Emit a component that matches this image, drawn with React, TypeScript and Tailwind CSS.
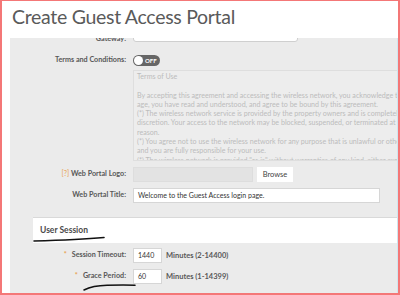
import type { ReactNode } from 'react';

const font = { fontFamily: 'Lato, "Open Sans", sans-serif' };

function Row({ label, children, className = '', labelClass = '' }: { label: ReactNode; children: ReactNode; className?: string; labelClass?: string }) {
  return (
    <div className={`flex items-center ${className}`}>
      <div className={`w-[123px] shrink-0 pr-[7px] text-right text-[7.2px] font-bold text-[#585858] ${labelClass}`}>{label}</div>
      <div className="flex items-center gap-[4px]">{children}</div>
    </div>
  );
}

const terms = [
  'Terms of Use',
  '\u00a0',
  'By accepting this agreement and accessing the wireless network, you acknowledge that you are of legal',
  'age, you have read and understood, and agree to be bound by this agreement.',
  '(*) The wireless network service is provided by the property owners and is completely at their',
  'discretion. Your access to the network may be blocked, suspended, or terminated at any time for any',
  'reason.',
  '(*) You agree not to use the wireless network for any purpose that is unlawful or otherwise prohibited',
  'and you are fully responsible for your use.',
  '(*) The wireless network is provided "as is" without warranties of any kind, either expressed or implied.',
];

export default function App() {
  return (
    <div
      className="relative w-[400px] h-[295px] overflow-hidden bg-white border-l-2 border-t border-r-2 border-b-2 border-[#f47777]"
      style={font}
    >
      <div className="h-[37px] pl-[10px] pt-[3px] text-[19.5px] leading-[26px] tracking-[-0.3px] text-[#5a5a5a]">Create Guest Access Portal</div>

      <div className="ml-[8px] h-[255px] overflow-hidden bg-[#ebebeb] border-r border-[#cfe6ef]">
        <div className="-mt-[11px]">
          <Row label="Gateway:" className="h-[15px] !items-end" labelClass="leading-[9px] -mb-[1px]">
            <div className="w-[165px] h-[15px] rounded-b-[3px] border border-[#cfcfcf] bg-white" />
          </Row>

          <Row label="Terms and Conditions:" className="mt-[13px] h-[11px]">
            <div className="flex h-[11px] w-[27px] items-center rounded-full bg-[#666666] pl-[1px]">
              <div className="h-[9px] w-[9px] rounded-full bg-white" />
              <span className="ml-[2px] text-[6px] font-bold leading-none text-white">OFF</span>
            </div>
          </Row>

          <div className="ml-[123px] mt-[4px] h-[91px] w-[300px] overflow-hidden border border-[#dedede] bg-[#ededed] px-[3px] pt-[1px] text-[7.1px] leading-[9.3px] whitespace-nowrap text-[#bcbcbc]">
            {terms.map((t, i) => (
              <div key={i}>{t}</div>
            ))}
          </div>

          <Row
            label={
              <>
                <span className="text-[#e8a14c] font-normal">[?]</span> Web Portal Logo:
              </>
            }
            className="mt-[6px] h-[15px]"
          >
            <div className="w-[120px] h-[15px] border border-[#dddddd] bg-[#e3e3e3]" />
            <div className="flex h-[15px] w-[36px] items-center justify-center bg-white text-[7.5px] text-[#444]">Browse</div>
          </Row>

          <Row label="Web Portal Title:" className="mt-[6px] h-[15px]">
            <div className="flex h-[15px] w-[247px] items-center border border-[#d6d6d6] bg-white px-[4px] text-[7px] text-[#333]">
              Welcome to the Guest Access login page.
            </div>
          </Row>

          <div className="mt-[14px] ml-[23px] h-[26px] border-t border-[#d9d9d9] bg-white pl-[7px] pt-[6px] text-[8.5px] font-bold text-[#4a4a4a]">
            User Session
          </div>

          <Row
            label={
              <>
                <span className="text-[#e8a14c] mr-[5px]">*</span>Session Timeout:
              </>
            }
            className="mt-[5px] h-[15px]"
          >
            <div className="flex h-[15px] w-[29px] items-center border border-[#d6d6d6] bg-white px-[4px] text-[7px] text-[#333]">1440</div>
            <span className="text-[7.5px] font-bold text-[#585858]">Minutes (2-14400)</span>
          </Row>

          <Row
            label={
              <>
                <span className="text-[#e8a14c] mr-[5px]">*</span>Grace Period:
              </>
            }
            className="mt-[6px] h-[15px]"
          >
            <div className="flex h-[15px] w-[29px] items-center border border-[#d6d6d6] bg-white px-[4px] text-[7px] text-[#333]">60</div>
            <span className="text-[7.5px] font-bold text-[#585858]">Minutes (1-14399)</span>
          </Row>
        </div>
      </div>

      {/* hand-drawn annotations */}
      <svg className="absolute left-0 top-0 pointer-events-none" width="400" height="295" viewBox="0 0 400 295">
        <path d="M32 240 C50 239.5 80 238.5 102 236.5" stroke="#111" strokeWidth="1.6" fill="none" strokeLinecap="round" />
        <path d="M82 289 C88 286 95 284.5 105 284.3 C115 284 125 284 133 284.2" stroke="#111" strokeWidth="1.6" fill="none" strokeLinecap="round" />
      </svg>
    </div>
  );
}
